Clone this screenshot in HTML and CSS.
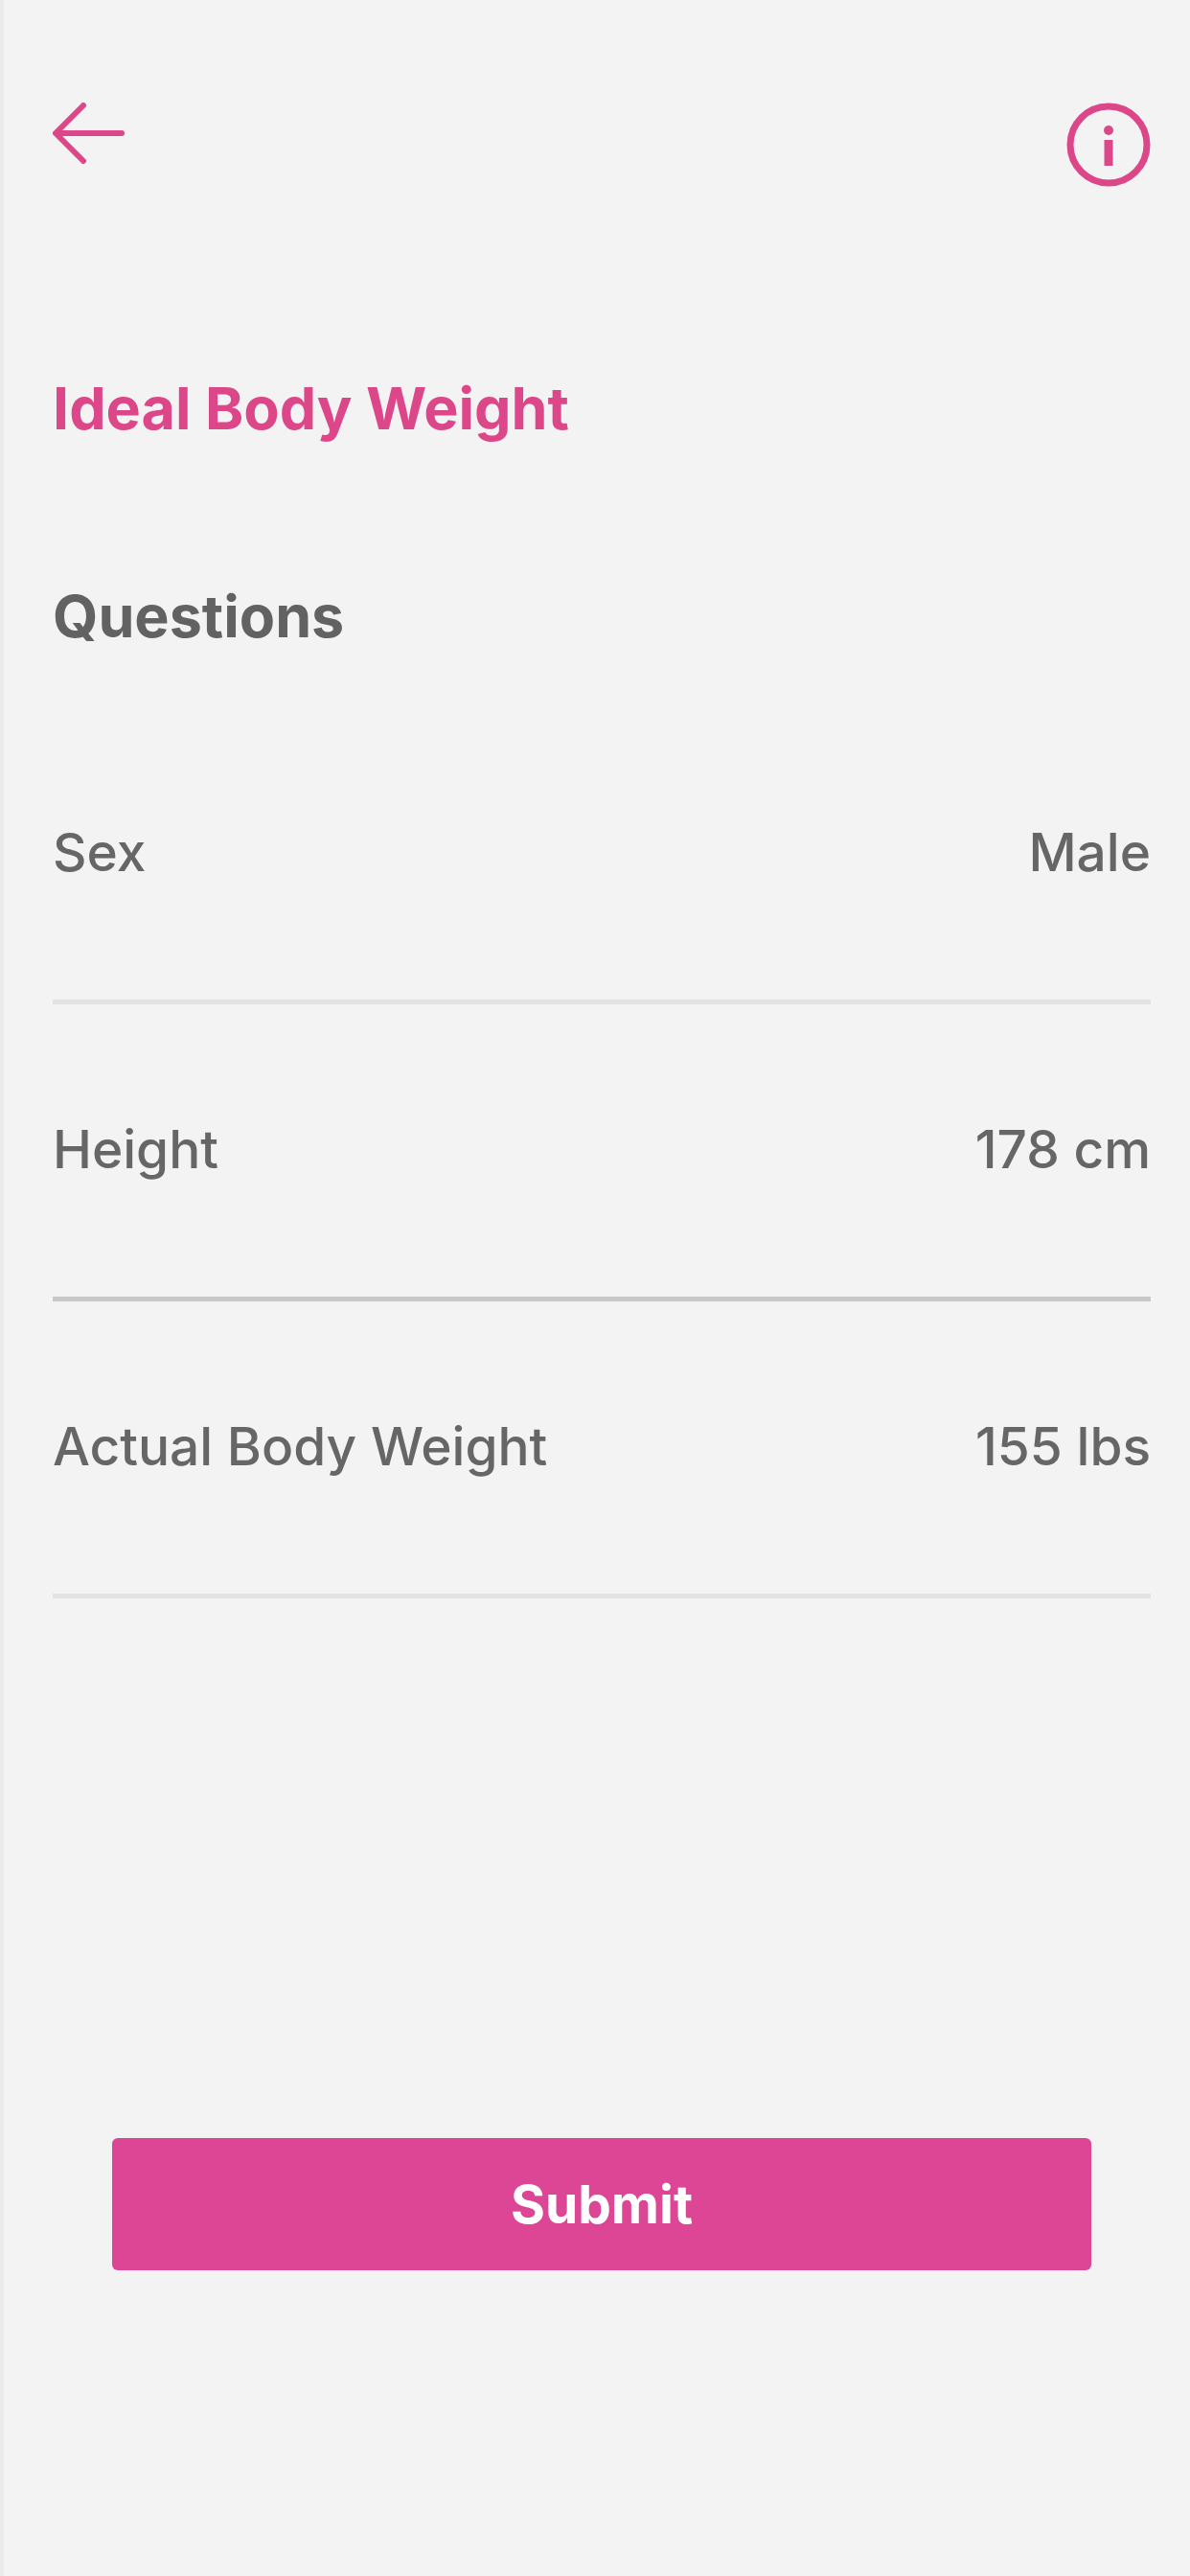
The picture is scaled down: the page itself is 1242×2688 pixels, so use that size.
FILE: index.html
```html
<!DOCTYPE html>
<html lang="en">
<head>
  <meta charset="utf-8">
  <meta name="viewport" content="width=device-width, initial-scale=1">
  <title>Ideal Body Weight</title>
  <link rel="stylesheet" href="styles.css">
</head>
<body>
  <main class="screen">
    <header class="topbar">
      <button class="icon-button" type="button" aria-label="Back">
        <svg class="icon-back" viewBox="0 0 76 64" fill="none" stroke="currentColor" stroke-width="6" stroke-linecap="round" stroke-linejoin="round">
          <path d="M32 3 3 32l29 29M4 32h68"/>
        </svg>
      </button>
      <button class="icon-button" type="button" aria-label="Information">
        <svg class="icon-info" viewBox="0 0 88 88" fill="none" stroke="currentColor">
          <circle cx="44" cy="44" r="40" stroke-width="7"/>
          <path d="M44 39v27" stroke-width="9"/>
          <circle cx="44" cy="29" r="5" fill="currentColor" stroke="none"/>
        </svg>
      </button>
    </header>
    <h1 class="title">Ideal Body Weight</h1>
    <h2 class="subtitle">Questions</h2>
    <form class="form">
      <div class="row">
        <label class="label" for="sex">Sex</label>
        <select class="value" id="sex">
          <option selected>Male</option>
          <option>Female</option>
        </select>
      </div>
      <div class="row row-active">
        <label class="label" for="height">Height</label>
        <input class="value" id="height" type="text" value="178 cm">
      </div>
      <div class="row">
        <label class="label" for="weight">Actual Body Weight</label>
        <input class="value" id="weight" type="text" value="155 lbs">
      </div>
      <button class="submit" type="submit">Submit</button>
    </form>
  </main>
</body>
</html>
```
FILE: styles.css
```css
* {
  box-sizing: border-box;
}

body {
  margin: 0;
  background: #f3f3f3;
  color: #666;
  font-family: Inter, "Liberation Sans", sans-serif;
}

.screen {
  min-height: 100vh;
  padding: 107px 41px 64px 51px;
  border-left: 4px solid #ebebeb;
}

.topbar {
  display: flex;
  justify-content: space-between;
  align-items: flex-start;
  height: 88px;
}

.icon-button {
  padding: 0;
  border: 0;
  background: none;
  color: #dc4789;
}

.icon-back,
.icon-info {
  display: block;
  height: 64px;
}

.icon-info {
  height: 88px;
}

.title,
.subtitle {
  margin: 0;
  font-size: 61px;
  line-height: 80px;
  font-weight: 650;
}

.title {
  margin-top: 191px;
  color: #dc4789;
}

.subtitle {
  margin-top: 137px;
  color: #626262;
}

.form {
  display: flex;
  flex-direction: column;
  margin-top: 55px;
}

.row {
  display: flex;
  align-items: center;
  gap: 24px;
  height: 310px;
  padding-bottom: 4px;
  border-bottom: 5px solid #e2e2e2;
}

.row-active {
  border-bottom-color: #c8c8c8;
}

.label,
.value {
  font-size: 55px;
  line-height: 72px;
  font-weight: 500;
}

.value {
  flex: 1;
  min-width: 0;
  padding: 0;
  border: 0;
  background: none;
  color: inherit;
  font-family: inherit;
  text-align: right;
  text-align-last: right;
  appearance: none;
}

.submit {
  height: 138px;
  margin: 563px 62px 0;
  border: 0;
  border-radius: 6px;
  background: #dc4694;
  color: #fff;
  font-family: inherit;
  font-size: 55px;
  font-weight: 700;
}
```
